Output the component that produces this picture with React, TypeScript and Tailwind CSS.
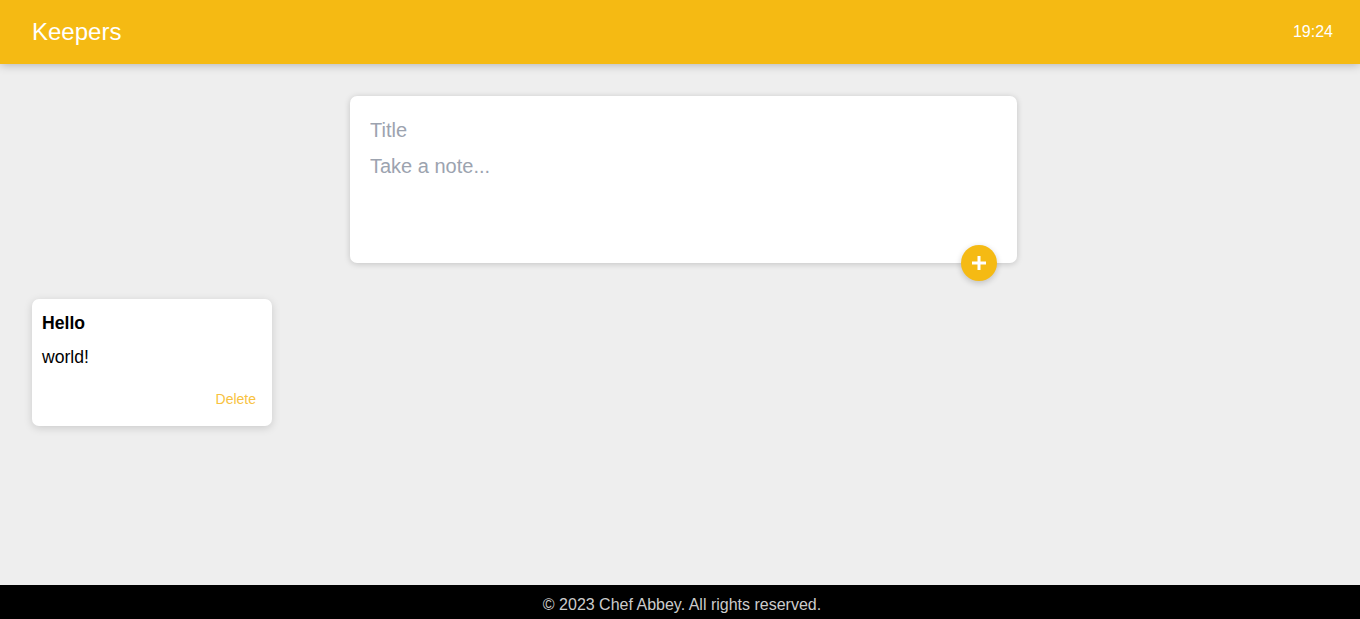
import React from "react";

const font = { fontFamily: '"Liberation Sans", Arial, sans-serif' };

function Header() {
  return (
    <header className="relative z-10 flex h-16 shrink-0 items-center justify-between bg-[#f5ba13] pl-8 pr-[27px] shadow-[0_0_10px_rgba(0,0,0,0.3)]">
      <h1 className="text-[24px] font-normal text-white">Keepers</h1>
      <span className="text-[16px] text-white">19:24</span>
    </header>
  );
}

function CreateArea() {
  return (
    <div className="flex justify-center pl-[7px] pt-8">
      <form className="relative flex h-[167px] w-[667px] flex-col rounded-[7px] bg-white px-5 pt-[23px] shadow-[0_1px_6px_rgba(0,0,0,0.18)]">
        <input
          name="title"
          placeholder="Title"
          className="h-[22px] w-full text-[20px] leading-[22px] outline-none placeholder:text-[#9ca3af]"
        />
        <textarea
          name="content"
          placeholder="Take a note..."
          className="mt-[14px] w-full flex-1 resize-none text-[20px] leading-[22px] outline-none placeholder:text-[#9ca3af]"
        />
        <button
          type="button"
          className="absolute right-5 bottom-[-18px] flex h-9 w-9 items-center justify-center rounded-full bg-[#f5ba13] text-white shadow-[0_2px_6px_rgba(0,0,0,0.2)]"
        >
          <svg width="18" height="18" viewBox="0 0 18 18">
            <path d="M9 2v14M2 9h14" stroke="white" strokeWidth="3" />
          </svg>
        </button>
      </form>
    </div>
  );
}

function Note({ title, content }: { title: string; content: string }) {
  return (
    <div className="ml-8 mt-9 w-[240px] rounded-[7px] bg-white px-[10px] pt-[10px] pb-[19px] shadow-[0_2px_8px_rgba(0,0,0,0.15)]">
      <h1 className="mt-1 text-[17.6px] font-bold leading-5">{title}</h1>
      <p className="mt-[14px] text-[17.6px] leading-5">{content}</p>
      <div className="mt-6 flex justify-end pr-[6px]">
        <button className="text-[14px] leading-4 text-[#f8c240]">Delete</button>
      </div>
    </div>
  );
}

export default function App() {
  return (
    <div className="flex h-screen flex-col bg-[#eee]" style={font}>
      <Header />
      <main className="flex-1">
        <CreateArea />
        <Note title="Hello" content="world!" />
      </main>
      <footer className="flex h-[34px] shrink-0 items-center justify-center bg-black pt-[5px] pl-1 text-[16px] text-[#ccc]">
        © 2023 Chef Abbey. All rights reserved.
      </footer>
    </div>
  );
}
